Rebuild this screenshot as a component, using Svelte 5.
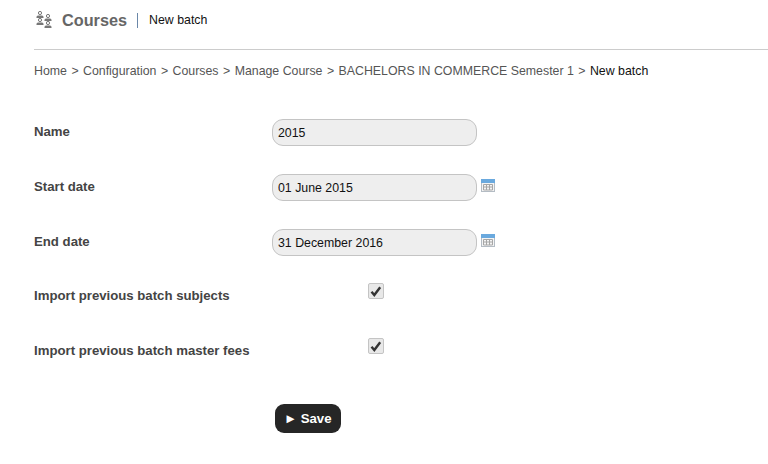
<script>
	const crumbs = ['Home', 'Configuration', 'Courses', 'Manage Course', 'BACHELORS IN COMMERCE Semester 1'];
	const fields = [
		{ label: 'Name', value: '2015', calendar: false },
		{ label: 'Start date', value: '01 June 2015', calendar: true },
		{ label: 'End date', value: '31 December 2016', calendar: true }
	];
	const checks = ['Import previous batch subjects', 'Import previous batch master fees'];
</script>

{#snippet person(x, y)}
	<circle cx={x} cy={y} r="1.6" fill="none" stroke="#777" stroke-width="1" />
	<path d="M{x - 3.5} {y + 5}v-1q0-1.3 1.5-1.5h4q1.5.2 1.5 1.5v1z" fill="#777" />
{/snippet}

<div class="page">
	<header class="head">
		<svg class="people" width="16" height="18" viewBox="0 0 16 18" aria-hidden="true">
			{@render person(4, 2)}
			{@render person(12, 5)}
			{@render person(4, 9)}
			{@render person(12, 12)}
		</svg>
		<h1>Courses</h1>
		<span class="sub">New batch</span>
	</header>

	<nav class="crumbs">
		{#each crumbs as crumb}
			<a href="#top">{crumb}</a><span class="sep">&gt;</span>
		{/each}
		<span class="current">New batch</span>
	</nav>

	<form class="form">
		{#each fields as field}
			<div class="row">
				<label for={field.label}>{field.label}</label>
				<input id={field.label} type="text" value={field.value} />
				{#if field.calendar}
					<svg class="cal" width="14" height="13" viewBox="0 0 14 13" aria-hidden="true">
						<rect x="0.5" y="0.5" width="13" height="12" fill="#f4f4f4" stroke="#b4bcc4" />
						<rect x="0" y="0" width="14" height="4" fill="#6aa9de" />
						<path d="M2.5 5.5h9v5.5h-9zM2.5 8h9M5.5 5.5v5.5M8.5 5.5v5.5" fill="none" stroke="#a6a6a6" stroke-width="1" />
					</svg>
				{/if}
			</div>
		{/each}
		{#each checks as check}
			<div class="row check">
				<span class="label">{check}</span>
				<span class="box">
					<svg width="12" height="11" viewBox="0 0 12 11" aria-hidden="true">
						<path d="M1.5 5.8 4.3 9 10.2 1.2" fill="none" stroke="#333" stroke-width="2.4" />
					</svg>
				</span>
			</div>
		{/each}
		<div class="actions">
			<button type="button">► Save</button>
		</div>
	</form>
</div>

<style>
	:global(body) {
		background: #fff;
		font-family: 'Liberation Sans', Arial, sans-serif;
	}

	.page {
		height: 464px;
		overflow: hidden;
		padding-left: 34px;
	}

	.head {
		display: flex;
		align-items: center;
		height: 50px;
		padding-bottom: 9px;
		box-sizing: border-box;
		border-bottom: 1px solid #ccc;
	}
	.people {
		margin-left: 2px;
		margin-right: 10px;
	}
	h1 {
		margin: 0;
		padding-right: 10px;
		border-right: 1px solid #6a87a8;
		font-size: 16.25px;
		line-height: 15px;
		color: #666;
	}
	.sub {
		margin-left: 11px;
		font-size: 12.35px;
		color: #111;
	}

	.crumbs {
		display: flex;
		margin-top: 13px;
		font-size: 12.35px;
		line-height: 16px;
		color: #555;
	}
	.crumbs a {
		color: #555;
		text-decoration: none;
	}
	.sep {
		margin: 0 4.45px;
	}
	.current {
		color: #111;
	}

	.form {
		margin-top: 40px;
	}
	.row {
		display: flex;
		align-items: center;
		height: 27px;
		margin-bottom: 28px;
	}
	.row label,
	.label {
		width: 238px;
		margin-top: -2px;
		font-size: 13.2px;
		font-weight: bold;
		color: #444;
	}
	input {
		width: 205px;
		height: 27px;
		box-sizing: border-box;
		padding: 0 5px;
		background: #eee;
		border: 1px solid #c4c4c4;
		border-radius: 11px;
		font: 12.35px 'Liberation Sans', Arial, sans-serif;
		color: #111;
	}
	.cal {
		margin: -4px 0 0 4px;
	}
	.check .label {
		margin-top: -4px;
	}
	.box {
		display: flex;
		align-items: center;
		justify-content: center;
		width: 14px;
		height: 14px;
		margin: -13px 0 0 96px;
		background: #e8e8e8;
		border: 1px solid #c4c4c4;
		border-radius: 2px;
	}

	.actions {
		margin: 38px 0 0 241px;
	}
	button {
		height: 29px;
		padding: 0 9px;
		background: #262626;
		border: 0;
		border-radius: 9px;
		font: bold 13.2px 'Liberation Sans', Arial, sans-serif;
		color: #fff;
	}
</style>
